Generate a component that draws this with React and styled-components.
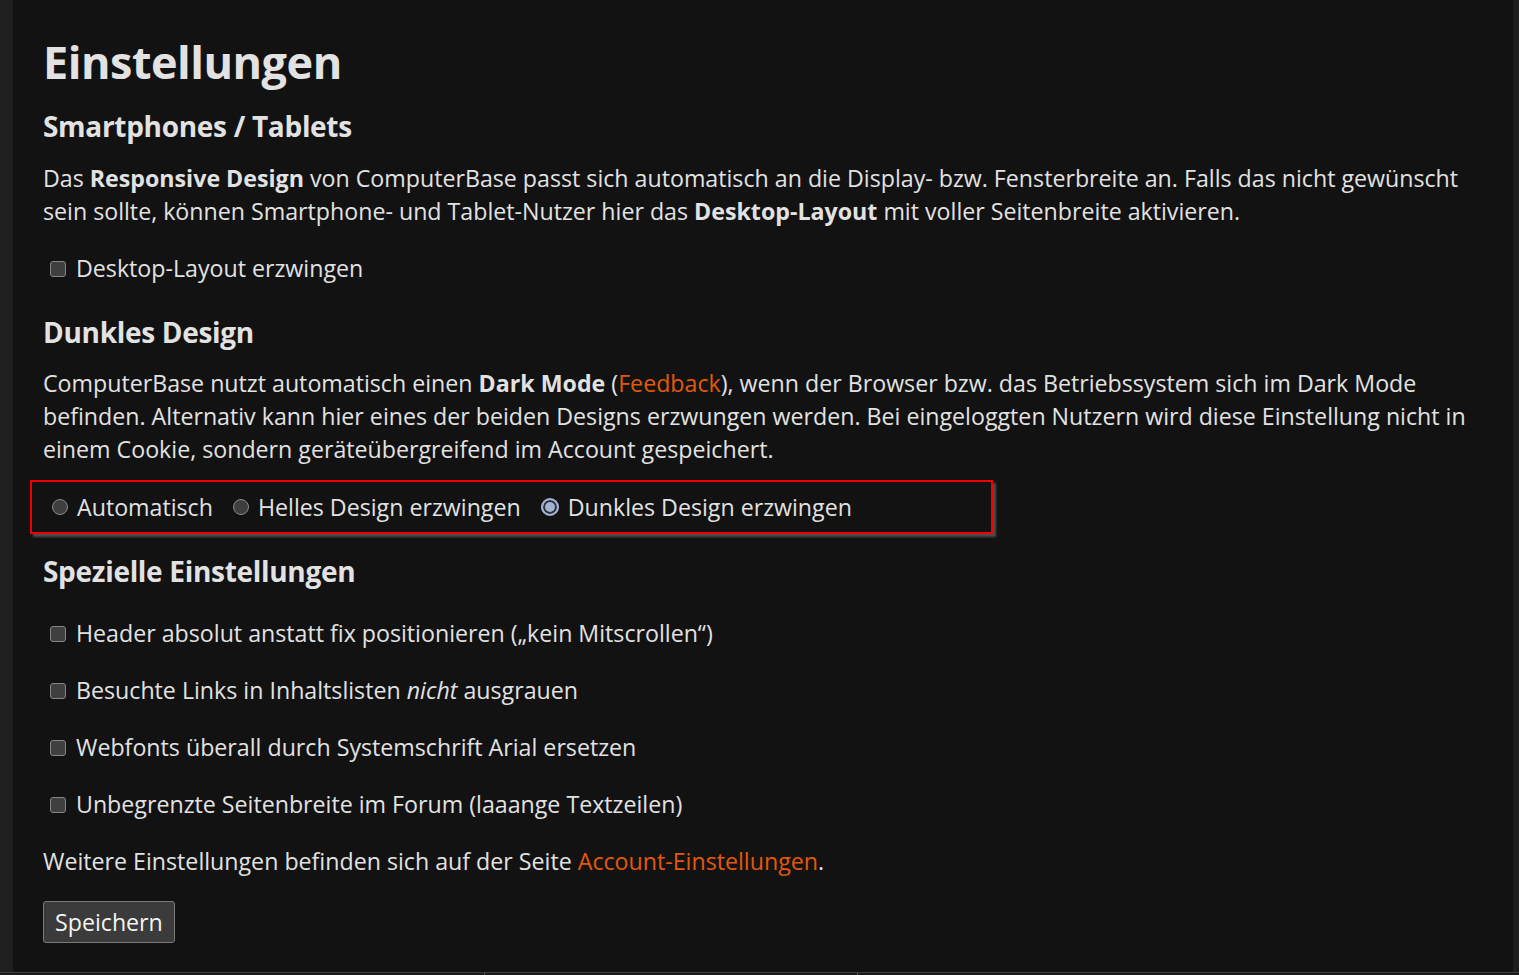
import React, { useState } from "react";
import styled, { createGlobalStyle } from "styled-components";

const Global = createGlobalStyle`
  html, body {
    margin: 0;
    padding: 0;
    background: #1f1f1f;
  }
  body {
    font-family: "Open Sans", "Noto Sans", sans-serif;
    color: #e2e2e2;
    overflow: hidden;
  }
`;

const Shell = styled.div`
  display: flex;
  min-height: 975px;
  flex-direction: column;
`;

const Main = styled.main`
  margin-left: 13px;
  width: 1500px;
  height: 972px;
  box-sizing: border-box;
  background: #121212;
  padding: 35px 30px 0 30px;
`;

const Footer = styled.footer`
  height: 3px;
  border-top: 1px solid #3c3c3c;
  background: #1a1a1a;
  display: flex;
`;

const FooterCell = styled.div`
  width: ${(p) => p.$w}px;
  border-right: 1px solid #555;
  height: 3px;
`;

const Title = styled.h1`
  font-size: 45px;
  font-weight: 700;
  margin: 0 0 19px;
  line-height: 1.2;
  letter-spacing: -0.5px;
`;

const Heading = styled.h2`
  font-size: 28px;
  font-weight: 700;
  margin: ${(p) => p.$mt || 0}px 0 ${(p) => p.$mb ?? 18}px;
  line-height: 36px;
  letter-spacing: -0.3px;
`;

const Text = styled.p`
  font-size: 23.2px;
  line-height: 33px;
  margin: ${(p) => p.$mt || 0}px 0 ${(p) => p.$mb || 0}px;
`;

const Link = styled.a`
  color: #e2590c;
  text-decoration: none;
`;

const CheckRow = styled.label`
  display: flex;
  align-items: center;
  gap: 10px;
  padding-left: 7px;
  font-size: 23.2px;
  line-height: 33px;
  height: 57px;
  cursor: pointer;
`;

const Box = styled.span`
  width: 14px;
  height: 14px;
  border: 1.5px solid #858585;
  border-radius: 3px;
  background: ${(p) => (p.$on ? "#a9bcdf" : "#3f3f3f")};
  flex: none;
`;

const RadioFrame = styled.div`
  display: flex;
  align-items: center;
  gap: 20px;
  width: 963px;
  height: 54px;
  margin: 14px 0 0 -13px;
  padding-left: 20px;
  border: 2px solid #f00000;
  box-sizing: border-box;
  box-shadow: 3px 3px 2px #4d4d4d;
`;

const RadioLabel = styled.label`
  display: flex;
  align-items: center;
  gap: 9px;
  font-size: 23.2px;
  line-height: 33px;
  cursor: pointer;
`;

const Dot = styled.span`
  width: 14px;
  height: 14px;
  border-radius: 50%;
  border: ${(p) => (p.$on ? "2px solid #a4b3d4" : "1.5px solid #8a8a8a")};
  background: ${(p) => (p.$on ? "#a4b3d4" : "#3f3f3f")};
  box-shadow: ${(p) => (p.$on ? "inset 0 0 0 2px #2b2f38" : "none")};
  flex: none;
`;

const Button = styled.button`
  font-family: inherit;
  font-size: 23.2px;
  color: #f4f4f4;
  background: #3b3b3b;
  border: 1px solid #7a7a7a;
  border-radius: 3px;
  padding: 0 11px;
  height: 42px;
  margin-top: 23px;
  cursor: pointer;
`;

const checks = [
  { key: "header", label: <>Header absolut anstatt fix positionieren („kein Mitscrollen“)</> },
  { key: "links", label: <>Besuchte Links in Inhaltslisten <i>nicht</i> ausgrauen</> },
  { key: "fonts", label: <>Webfonts überall durch Systemschrift Arial ersetzen</> },
  { key: "width", label: <>Unbegrenzte Seitenbreite im Forum (laaange Textzeilen)</> },
];

const radios = [
  { key: "auto", label: "Automatisch" },
  { key: "light", label: "Helles Design erzwingen" },
  { key: "dark", label: "Dunkles Design erzwingen" },
];

export default function App() {
  const [flags, setFlags] = useState({});
  const [mode, setMode] = useState("dark");
  const toggle = (k) => setFlags((f) => ({ ...f, [k]: !f[k] }));

  return (
    <Shell>
      <Global />
      <Main>
        <Title>Einstellungen</Title>
        <Heading>Smartphones / Tablets</Heading>
        <Text $mb={12}>
          Das <b>Responsive Design</b> von ComputerBase passt sich automatisch an die Display- bzw. Fensterbreite an. Falls das nicht gewünscht sein sollte, können Smartphone- und Tablet-Nutzer hier das <b>Desktop-Layout</b> mit voller Seitenbreite aktivieren.
        </Text>
        <CheckRow onClick={() => toggle("desktop")}>
          <Box $on={flags.desktop} />
          Desktop-Layout erzwingen
        </CheckRow>

        <Heading $mt={17} $mb={17}>Dunkles Design</Heading>
        <Text>
          ComputerBase nutzt automatisch einen <b>Dark Mode</b> (<Link href="#">Feedback</Link>), wenn der Browser bzw. das Betriebssystem sich im Dark Mode befinden. Alternativ kann hier eines der beiden Designs erzwungen werden. Bei eingeloggten Nutzern wird diese Einstellung nicht in einem Cookie, sondern geräteübergreifend im Account gespeichert.
        </Text>
        <RadioFrame>
          {radios.map((r) => (
            <RadioLabel key={r.key} onClick={() => setMode(r.key)}>
              <Dot $on={mode === r.key} />
              {r.label}
            </RadioLabel>
          ))}
        </RadioFrame>

        <Heading $mt={19} $mb={16}>Spezielle Einstellungen</Heading>
        {checks.map((c) => (
          <CheckRow key={c.key} onClick={() => toggle(c.key)}>
            <Box $on={flags[c.key]} />
            <span>{c.label}</span>
          </CheckRow>
        ))}
        <Text $mt={12}>
          Weitere Einstellungen befinden sich auf der Seite <Link href="#">Account-Einstellungen</Link>.
        </Text>
        <Button>Speichern</Button>
      </Main>
      <Footer>
        <FooterCell $w={484} />
        <FooterCell $w={372} />
      </Footer>
    </Shell>
  );
}
